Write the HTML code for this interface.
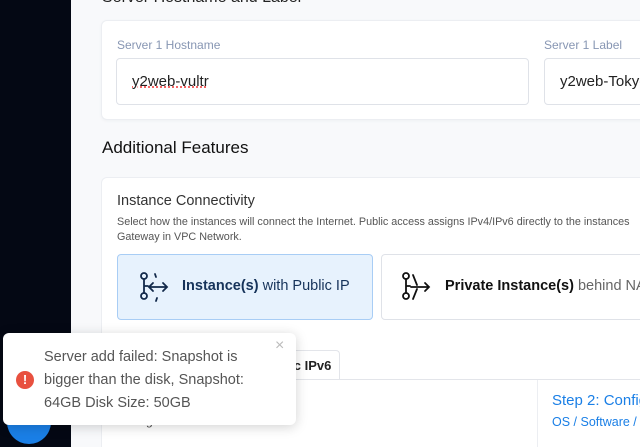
<!DOCTYPE html>
<html style="width:640px;height:447px;overflow:hidden"><head><style>
*{box-sizing:border-box;margin:0;padding:0}
body{width:640px;height:447px;overflow:hidden;background:#f8f9fb;font-family:"Liberation Sans",sans-serif;position:relative}
.abs{position:absolute;white-space:nowrap}
</style></head><body>
<div class="abs" style="left:0;top:0;width:71px;height:447px;background:#040814"></div>
<div class="abs" style="left:102px;top:-11px;font-size:16px;color:#222">Server Hostname and Label</div>
<div class="abs" style="left:101px;top:20px;width:560px;height:100px;background:#fff;border:1px solid #eceef2;border-radius:6px;box-shadow:0 1px 3px rgba(0,0,0,.04)"></div>
<div class="abs" style="left:117px;top:38px;font-size:12px;color:#8796b3">Server 1 Hostname</div>
<div class="abs" style="left:544px;top:38px;font-size:12px;color:#8796b3">Server 1 Label</div>
<div class="abs" style="left:116px;top:58px;width:413px;height:47px;border:1px solid #dfe2e8;border-radius:4px;background:#fff"></div>
<div class="abs" style="left:544px;top:58px;width:120px;height:47px;border:1px solid #dfe2e8;border-radius:4px;background:#fff"></div>
<div class="abs" style="left:132px;top:73px;font-size:15px;color:#222;text-decoration:underline dotted #e33">y2web-vultr</div>
<div class="abs" style="left:560px;top:73px;font-size:15px;color:#222">y2web-Tokyo</div>
<div class="abs" style="left:102px;top:138px;font-size:17px;color:#111">Additional Features</div>
<div class="abs" style="left:101px;top:177px;width:560px;height:280px;background:#fff;border:1px solid #eceef2;border-radius:6px"></div>
<div class="abs" style="left:117px;top:193px;font-size:14.5px;color:#333">Instance Connectivity</div>
<div class="abs" style="left:117px;top:215px;font-size:10.8px;color:#555;line-height:15px">Select how the instances will connect the Internet. Public access assigns IPv4/IPv6 directly to the instances<br>Gateway in VPC Network.</div>
<div class="abs" style="left:117px;top:254px;width:256px;height:66px;background:#e7f2fd;border:1px solid #a8cdf5;border-radius:4px"></div>
<div class="abs" style="left:381px;top:254px;width:280px;height:66px;background:#fff;border:1px solid #dfe2e8;border-radius:4px"></div>
<svg class="abs" style="left:138px;top:271px" width="32" height="32" viewBox="0 0 32 32" fill="none" stroke="#12294a" stroke-width="1.8" stroke-linecap="round">
<circle cx="6" cy="5" r="3"/><circle cx="6" cy="25" r="3"/><path d="M6 8v14M6 15h4"/><path d="M12 16h16M15 12l-4 4 4 4M25 12l4 4-4 4"/><path d="M17 3l1 3M19 27l-1 3" /></svg>
<div class="abs" style="left:182px;top:278px;font-size:14.5px;color:#16335a"><b>Instance(s)</b> with Public IP</div>
<svg class="abs" style="left:400px;top:271px" width="32" height="32" viewBox="0 0 32 32" fill="none" stroke="#111" stroke-width="1.8" stroke-linecap="round">
<circle cx="6" cy="5" r="3"/><circle cx="6" cy="25" r="3"/><path d="M6 8v14M6 15h4"/><path d="M13 4l4 10M13 28l4-10M11 16h18M25 12l4 4-4 4"/></svg>
<div class="abs" style="left:445px;top:278px;font-size:14.5px;color:#111"><b>Private Instance(s)</b> <span style="color:#666">behind NAT</span></div>
<div class="abs" style="left:230px;top:350px;width:110px;height:30px;background:#fff;border:1px solid #e3e5ea;border-bottom:none;border-radius:4px 4px 0 0"></div>
<div class="abs" style="left:262px;top:358px;font-size:13px;font-weight:bold;color:#222">Public IPv6</div>
<div class="abs" style="left:101px;top:379px;width:560px;height:1px;background:#e3e5ea"></div>
<div class="abs" style="left:537px;top:380px;width:1px;height:70px;background:#eceef2"></div>
<div class="abs" style="left:220px;top:392px;font-size:15px;color:#222">Select Plan</div>
<div class="abs" style="left:118px;top:414px;font-size:12px;color:#444">Configure Hardware</div>
<div class="abs" style="left:552px;top:392px;font-size:15px;color:#1a7fe6">Step 2: Configure</div>
<div class="abs" style="left:552px;top:415px;font-size:12.5px;color:#1a7fe6">OS / Software / </div>
<div class="abs" style="left:7px;top:400px;width:44px;height:44px;border-radius:50%;background:#1a7fe6"></div>
<div class="abs" style="left:3px;top:333px;width:293px;height:92px;background:#fff;border-radius:6px;box-shadow:0 2px 12px rgba(0,0,0,.18)"></div>
<div class="abs" style="left:16px;top:371px;width:18px;height:18px;border-radius:50%;background:#e8503f;color:#fff;font-size:13px;font-weight:bold;text-align:center;line-height:18px">!</div>
<div class="abs" style="left:44px;top:346px;font-size:14.5px;line-height:23px;color:#555">Server add failed: Snapshot is<br>bigger than the disk, Snapshot:<br>64GB Disk Size: 50GB</div>
<div class="abs" style="left:275px;top:337px;font-size:16px;color:#bbb">×</div>
</body></html>
